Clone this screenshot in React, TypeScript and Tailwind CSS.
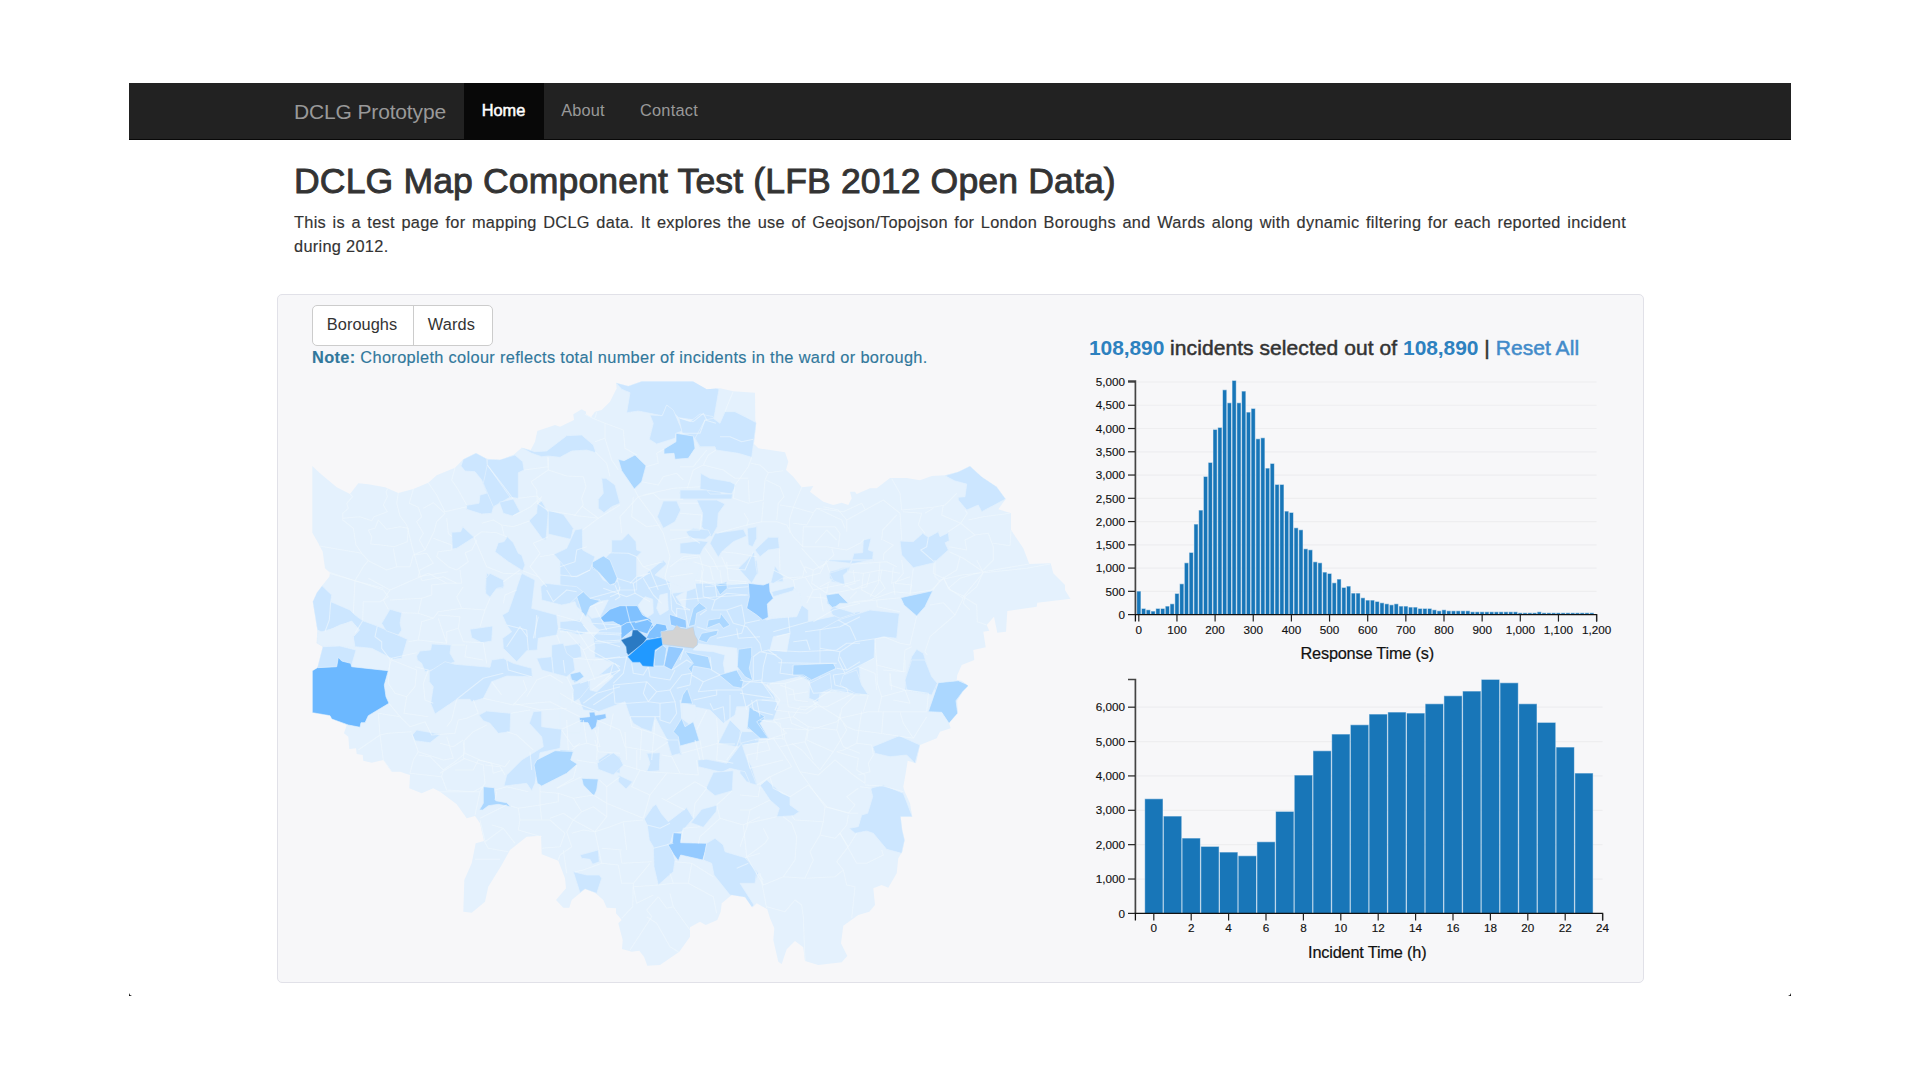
import React from "react";

type Sector = { ox: number; oy: number };
type Shape = [level: string, points: string];

const LEVELS: Record<string, string> = {
  a: "#e4f1fd",
  b: "#cce6ff",
  c: "#abd7ff",
  d: "#94caff",
  e: "#80c1ff",
  f: "#6cb8ff",
  g: "#2199ff",
  h: "#2a7ac3",
  n: "#d3d3d3",
};

const NW: Sector = { ox: 300, oy: 370 };
const NE: Sector = { ox: 680, oy: 370 };
const W: Sector = { ox: 300, oy: 570 };
const CENTRE: Sector = { ox: 560, oy: 560 };
const SW: Sector = { ox: 440, oy: 740 };
const SE: Sector = { ox: 740, oy: 660 };
const E: Sector = { ox: 820, oy: 560 };

const place = (s: Sector, pts: string) =>
  pts
    .trim()
    .split(/\s+/)
    .map((p) => {
      const [x, y] = p.split(",").map(Number);
      return `${(s.ox + x / 3).toFixed(1)},${(s.oy + y / 3).toFixed(1)}`;
    })
    .join(" ");

const OUTLINE = [
  place(NW, "37,288 60,310 110,352 150,372 175,340 205,343 255,352 295,369 340,357 385,338 410,316 465,293 490,268 528,249 560,266 600,269 640,255 665,233 692,240 705,215 712,183 765,165 780,170 822,150 820,133 845,118 858,125 858,133 873,142 885,125 905,120 930,95 950,55 948,38 985,48 1025,34 1175,34"),
  place(NE, "38,34 80,58 120,55 160,64 225,68 226,150 229,160 222,222 235,235 315,247 325,275 318,300 340,320 365,352 400,348 390,365 430,395 460,405 485,398 505,405 515,385 510,365 525,365 530,372 570,355 590,355 630,324 680,324 720,331 755,318 795,316 835,305 870,288 905,320 950,350 977,387 955,418 993,430 993,480 1030,535 1048,582 1112,580 1120,610 1155,645 1155,660 1170,685"),
  place(E, "752,116 652,128 650,140 562,153 558,215 532,218 522,170 500,195 508,212 490,215 497,262 460,270 463,300 425,315 412,345 410,360 425,362 445,378"),
  place(SE, "668,95 652,122 653,160 627,190 632,205 600,215 590,235 540,255 528,310 503,302 497,340 490,380 494,395 510,430 517,470 482,470 487,510 494,540 487,575 475,595 470,640 445,683 425,675 400,685 405,735 388,755 355,765 310,797 303,850 322,888 305,907 235,915 195,903 190,862 165,843 140,868 125,912 115,905 100,840 103,805 90,775 82,748 50,730 38,742"),
  place(SW, "935,500 915,472 875,465 845,490 842,515 832,540 797,555 780,545 750,562 750,590 718,635 660,675 622,677 612,650 598,632 575,635 546,627 548,600 535,550 545,540 528,520 528,505 500,503 490,480 465,458 435,447 395,480 388,503 370,503 348,480 378,445 375,415 355,362 305,343 303,287 260,290 210,330 185,375 145,440 135,485 95,518 70,515 73,420 95,370 107,310 132,303 120,250 105,228 80,235 50,193 0,155"),
  place(W, "400,655 365,670 328,655 330,615 300,605 275,605 250,570 215,578 190,572 188,555 170,552 168,535 148,537 145,500 132,490 140,465 95,447 90,437 37,428 37,302 52,293 68,230 50,220 52,180 38,95 50,68 66,47 88,20"),
  place(NW, "90,608 75,595 68,545 55,520 37,488"),
].join(" ");

const WARDS: [Sector, Shape[]][] = [
  [NW, [
    ["b", "948,38 985,48 1025,34 1200,34 1257,58 1240,155 1200,160 1185,150 1136,143 1100,105 1087,137 1050,130 1015,123 980,128 990,68 965,58"],
    ["b", "1050,135 1087,137 1100,105 1120,120 1147,183 1128,190 1125,205 1070,222 1048,208 1060,160"],
    ["b", "1136,143 1170,155 1200,132 1240,140 1245,225 1200,232 1180,200 1147,190"],
    ["c", "1128,190 1180,198 1185,235 1165,265 1125,268 1122,250 1092,252 1092,237 1128,215"],
    ["c", "955,268 972,272 1005,255 1038,287 1025,335 1003,357 965,302"],
    ["b", "665,233 705,245 740,243 800,197 845,195 880,225 888,248 860,240 815,243 780,262 745,258 725,260 695,250"],
    ["b", "483,288 490,268 528,249 560,266 562,285 625,380 580,412 575,430 545,432 500,418 500,406 537,400 540,375 560,370 545,330 525,305 495,303"],
    ["b", "562,268 600,269 645,255 668,275 672,300 655,308 655,385 630,382 562,285"],
    ["b", "562,285 630,382 580,410 550,340"],
    ["b", "598,397 640,387 660,425 638,438 610,430"],
    ["b", "455,487 482,485 488,470 522,502 470,535 457,537"],
    ["b", "687,452 710,430 712,403 725,393 745,428 738,510 728,508"],
    ["b", "745,420 790,433 820,475 812,508 745,492"],
    ["b", "905,325 918,325 945,345 960,400 935,410 912,428 895,415 895,388 910,370"],
    ["b", "585,545 595,518 612,515 622,500 640,518 655,550 665,555 675,585 668,602 625,575"],
    ["b", "762,553 800,535 825,480 847,476 848,540 885,560 870,600 830,618 815,620 790,585"],
    ["b", "935,510 965,510 985,490 1008,515 1010,540 1025,545 1010,560 1010,660 960,660 950,620 915,565 935,545"],
    ["c", "877,577 910,558 930,570 952,625 945,640 930,645 895,605 877,590"],
    ["b", "1090,393 1130,393 1142,420 1125,455 1090,475 1072,440"],
    ["b", "1137,368 1150,360 1260,362 1270,388 1150,388"],
    ["b", "560,610 580,620 612,630 610,655 555,660"],
    ["b", "665,612 705,635 690,660 660,660"],
  ]],
  [NE, [
    ["b", "120,160 135,125 165,125 195,140 229,158 215,262 175,250 108,240 105,230 60,230 45,205 75,150 100,145"],
    ["b", "62,310 90,325 150,335 168,345 155,372 60,358"],
    ["b", "0,360 80,360 90,372 158,372 155,387 0,387"],
    ["b", "50,390 110,390 135,402 115,430 112,470 95,500 85,495 65,470 68,430"],
    ["b", "18,485 40,475 85,480 92,495 75,508 30,505"],
    ["b", "0,520 60,512 85,515 70,535 60,555 0,550"],
    ["b", "90,520 105,490 190,478 200,498 160,515 125,545 115,562"],
    ["b", "202,475 230,470 230,505 218,530 205,525"],
    ["b", "225,540 265,502 295,502 298,535 265,540 240,560"],
    ["b", "175,595 200,570 222,545 228,590 232,610 215,640"],
    ["b", "272,638 285,588 300,610 312,622 280,640"],
    ["b", "795,317 835,305 870,288 905,320 950,350 977,387 905,425 895,405 860,420 835,390 835,382 855,380 860,342 825,333"],
    ["b", "660,513 700,515 728,490 745,502 775,485 780,500 805,488 808,512 795,518 805,540 762,578 700,593 665,555"],
    ["b", "550,510 573,505 565,540 580,545 578,568 512,583 522,550 548,548"],
    ["b", "447,605 510,590 505,603 490,610 492,640 450,627"],
  ]],
  [W, [
    ["b", "38,95 50,68 66,47 95,75 92,95 150,120 165,135 188,152 232,168 322,208 305,265 280,268 215,235 165,230 160,200 178,180 155,153 100,175 75,190 52,180"],
    ["a", "52,190 100,175 120,165 155,155 178,180 160,200 162,232 68,228 50,218"],
    ["b", "245,160 270,118 305,128 300,160 305,180 295,195 258,182"],
    ["b", "68,230 120,228 168,240 155,285 110,292 52,293"],
    ["f", "37,302 52,293 110,290 115,262 125,273 152,280 155,290 265,302 253,345 258,380 267,400 205,437 195,458 183,458 180,472 145,465 95,447 90,437 37,428"],
    ["b", "350,258 360,243 392,240 395,222 453,225 450,250 465,275 415,295 375,305 365,280 352,270"],
    ["b", "388,305 435,275 465,283 570,292 575,270 610,265 640,280 695,295 697,320 620,318 575,335 550,385 515,395 510,388 470,388 405,432 392,400 400,350 388,335"],
    ["b", "510,178 578,168 575,213 545,218 515,203"],
    ["b", "607,135 625,125 665,10 705,30 695,115 770,135 775,175 770,195 715,205 712,240 680,242 650,275 610,235 608,205 635,185 620,165"],
    ["b", "558,25 570,10 610,30 612,50 590,55 570,82 557,70"],
    ["b", "722,50 735,40 830,50 848,65 810,100 785,105 725,90"],
    ["b", "755,225 790,220 800,250 820,265 825,300 800,320 760,310 725,300 710,265 755,260"],
    ["c", "830,80 850,65 870,85 902,92 870,110 858,140 845,125"],
    ["c", "810,312 840,305 852,320 830,335 815,330"],
    ["b", "815,345 865,330 868,350 840,385 822,395"],
    ["b", "337,495 350,480 422,493 390,518 345,512"],
    ["b", "537,435 560,423 632,430 630,485 595,490 570,460 550,452"],
    ["b", "688,460 700,425 725,423 725,470 785,478 780,535 720,548 705,640 695,662 680,640 612,648 620,615 665,570 730,530 725,500"],
    ["c", "702,585 710,570 765,542 820,545 812,570 832,582 800,610 725,648 712,640"],
    ["b", "895,570 925,550 960,560 960,610 900,598"],
    ["c", "845,625 895,627 890,660 882,678 850,645"],
    ["c", "550,650 583,653 587,692 620,698 632,710 595,703 565,707 548,720 538,720 550,700"],
  ]],
  [CENTRE, [
    ["b", "0,0 70,0 110,30 130,60 160,75 175,55 210,45 250,50 265,35 310,0 320,12 285,45 330,65 335,100 375,95 405,85 405,70 560,70 570,75 568,140 620,180 640,175 710,165 725,135 745,150 745,185 860,160 900,155 900,405 830,395 790,395 765,425 745,405 750,365 720,350 625,375 610,370 650,415 655,440 640,480 600,480 580,460 560,440 490,490 450,450 400,440 360,420 365,475 410,510 360,560 365,585 330,575 325,545 300,500 285,470 275,515 245,505 220,490 210,470 195,425 115,455 70,450 45,390 60,370 100,360 160,310 120,295 95,290 105,265 100,230 120,210 100,200 90,175 75,160 50,140 0,130"],
    ["a", "235,135 255,110 278,118 280,160 262,172 245,155"],
    ["a", "300,105 322,100 325,150 300,165 290,145"],
    ["a", "348,110 380,92 375,150 362,130"],
    ["a", "80,130 145,120 120,170 95,175 60,140"],
    ["a", "0,135 45,125 60,170 95,190 110,205 95,235 105,290 80,350 60,370 0,350"],
    ["b", "0,185 60,180 85,215 60,225 0,210"],
    ["b", "0,260 60,250 65,290 30,300 0,295"],
    ["a", "90,350 150,340 160,350 110,395 90,390"],
    ["a", "165,60 190,50 215,65 205,80 185,75"],
    ["a", "320,10 400,5 420,20 400,70 370,85 330,65 310,50"],
    ["a", "405,250 530,265 535,330 495,340 490,310 495,285 460,275 400,270"],
    ["a", "610,120 700,85 720,100 725,135 710,170 640,175"],
    ["a", "640,230 690,220 680,275 630,270"],
    ["a", "630,370 720,350 750,365 745,425 650,430"],
    ["a", "530,440 565,440 568,490 545,515 520,490"],
    ["a", "365,435 405,435 410,470 400,490 385,485 365,475"],
    ["a", "0,400 65,450 60,520 0,520"],
    ["c", "97,25 110,0 145,0 172,50 165,68 155,75 130,45"],
    ["c", "50,105 65,98 85,120 120,118 90,135 80,170 65,155"],
    ["e", "120,175 150,148 180,137 232,137 248,165 272,178 280,200 260,222 225,210 183,198 160,185 132,187"],
    ["e", "183,198 200,188 225,185 262,178 278,190 262,222 240,215 215,212 183,238"],
    ["e", "258,235 268,215 290,190 318,195 322,210 305,220 303,232 272,238"],
    ["h", "183,240 215,228 218,210 232,210 260,235 250,250 205,285 200,278 198,260"],
    ["g", "203,290 260,240 305,232 308,255 285,270 280,320 248,318 240,307 218,307"],
    ["c", "282,318 285,275 308,255 320,265 312,318"],
    ["d", "312,318 325,258 372,265 335,330"],
    ["n", "303,215 340,210 350,195 362,205 380,207 400,200 405,225 413,240 412,255 400,265 320,255 308,253"],
    ["d", "328,163 350,170 378,180 380,205 350,200 332,195"],
    ["c", "385,200 400,145 418,128 440,145 410,160 405,195"],
    ["c", "440,205 445,180 480,175 482,160 510,195 490,205 478,190"],
    ["c", "415,240 425,220 475,210 470,225 450,232 440,248"],
    ["c", "465,75 500,65 502,85 480,105"],
    ["d", "565,70 610,75 628,68 630,95 640,115 622,132 625,172 608,180 590,165 560,145 568,110"],
    ["c", "375,275 445,290 455,328 400,318 395,340 385,325 400,310"],
    ["c", "478,345 530,330 550,365 545,385 520,380"],
    ["c", "535,268 575,262 575,290 568,325 578,362 555,350 532,320"],
    ["c", "697,318 820,310 828,325 750,362 728,348 698,345"],
    ["c", "800,108 830,103 865,130 835,130 820,148 802,130"],
    ["c", "368,405 382,385 398,432 362,430"],
    ["d", "58,473 89,470 87,457 104,456 106,466 137,461 139,475 112,483 108,500 95,511 84,488 60,486"],
    ["c", "30,345 60,335 70,348 45,368 32,355"],
    ["c", "340,515 365,475 375,500 400,485 418,542 360,558 355,530"],
    ["c", "565,435 580,445 582,465 615,475 600,490 628,538 595,520 560,505 575,480"],
    ["b", "475,550 510,480 545,515 600,530 595,548 530,560"],
    ["c", "0,570 38,572 20,598 0,600"],
    ["b", "810,45 840,25 870,20 865,35 840,50 850,70 815,65"],
    ["b", "635,65 645,20 668,50 670,65"],
    ["b", "635,95 705,78 700,92 640,110"],
    ["b", "550,20 590,0 595,40 575,60"],
  ]],
  [E, [
    ["b", "0,0 0,0 90,10 95,0 160,0"],
    ["b", "28,40 85,22 82,35 70,45 75,75 40,62"],
    ["c", "18,105 55,100 85,130 60,130 40,145 25,130"],
    ["c", "242,113 338,92 315,140 290,168 252,135"],
    ["b", "0,210 55,180 150,150 238,160 230,235 190,230 165,237 162,295 118,320 122,390 0,390"],
    ["b", "258,350 275,290 290,268 310,280 335,360 350,368 350,390 255,390"],
    ["c", "0,315 40,310 47,328 0,342"],
    ["b", "30,150 42,140 105,160 60,175 38,165"],
  ]],
  [SE, [
    ["b", "495,60 515,0 555,0 575,50 592,70 575,105 500,90"],
    ["c", "565,155 595,68 655,62 687,76 668,95 648,122 653,160 627,190 605,157"],
    ["b", "398,260 440,243 478,227 540,255 525,310 500,285 450,290 405,280"],
    ["b", "383,460 398,410 392,385 430,375 490,400 517,470 482,470 487,510 494,540 485,580 440,568 400,520 380,513 345,520 328,505 355,500 365,465"],
    ["b", "60,375 80,360 125,400 150,410 150,435 178,455 160,467 110,470 118,445 90,420"],
    ["b", "210,70 270,40 275,85 240,100 235,125 207,115"],
    ["b", "310,45 350,30 365,75 385,105 345,100 300,75"],
    ["b", "0,595 20,595 55,640 45,668 10,665"],
    ["b", "0,255 15,285 35,320 52,375 20,365 0,340"],
    ["b", "0,215 50,215 60,235 20,245 0,250"],
    ["c", "160,15 280,10 288,25 215,60 190,45 158,45"],
    ["c", "28,140 75,170 50,185 85,235 60,235 22,200"],
  ]],
  [SW, [
    ["b", "472,70 520,38 540,55 550,75 520,105 475,88"],
    ["b", "535,105 578,125 558,147 535,125"],
    ["b", "620,40 660,38 658,92 620,95 630,70"],
    ["b", "680,0 715,0 722,40 695,47"],
    ["b", "773,60 800,58 860,70 905,10 925,70 950,135 930,130 915,95 870,85 845,97 775,80"],
    ["b", "798,145 820,97 880,92 877,152 825,167"],
    ["b", "613,237 638,200 648,193 665,222 685,245 740,203 760,235 725,275 700,280 690,312 705,360 700,395 655,435 642,380 640,320 628,300 622,255"],
    ["d", "683,312 697,308 700,278 725,280 722,308 800,310 798,330 788,360 722,345 715,362 702,345"],
    ["b", "753,248 785,208 832,195 828,215 790,262"],
    ["b", "800,310 825,295 850,315 855,335 915,353 950,395 945,430 900,430 942,495 935,502 915,472 870,465 822,405 815,370 790,360"],
    ["b", "420,345 475,330 478,365 458,373 450,358 425,355"],
    ["b", "400,395 440,405 478,405 485,415 470,460 435,447 420,458"],
  ]],
];

const BOUNDARIES: [Sector, string[]][] = [
  [NW, [
    "150,372 158,380 140,400 145,415 128,430 128,450 160,475 168,525 185,550 205,572",
    "128,445 180,440 215,452 222,440 262,425 250,405 262,380 258,365 265,352",
    "295,369 290,400 300,438 320,465 335,525 365,632",
    "340,357 328,400 355,412 365,440 350,455 370,490 358,510 375,540 340,555",
    "385,338 410,375 435,425 500,410",
    "465,293 455,330 475,360 500,405",
    "205,480 225,475 235,450 260,478 300,470 325,475 322,515 282,530 245,525 212,522 215,500 205,480",
    "58,528 185,550", "75,602 165,632 250,655", "205,572 190,590 165,632",
    "205,572 260,600 290,590 280,535", "290,590 330,590 340,555",
    "370,415 400,398 435,430 410,455 402,485 385,520 375,540",
    "440,445 445,490 455,500", "400,505 455,525 455,540 415,545 410,560 445,590",
    "340,555 380,550 400,580 360,600 355,620 445,605", "365,632 430,620 470,640",
    "522,502 545,485 590,488 620,500", "522,502 560,590 610,610 665,612",
    "545,460 580,450 605,465 640,470 690,452", "605,465 612,495", "638,438 690,412 725,380 712,403",
    "655,385 710,378 725,393", "495,548 515,540 530,510", "495,548 505,575 470,600 445,590",
    "693,335 710,360 712,400 745,422 825,435 850,405 845,385 858,350 850,320 800,318 745,300 693,335",
    "672,300 745,290 745,262", "743,262 745,300", "885,245 920,280 930,320",
    "885,215 915,205 915,160 885,148 855,133", "915,160 970,180 975,235 1010,255", "915,205 935,270 955,300",
    "885,145 890,125", "820,436 895,445 960,405", "845,408 895,445 848,480",
    "1003,357 1015,380 1060,370 1080,388 1150,388", "1015,380 960,440 965,490",
    "1015,380 1060,440 1090,490 1110,560", "1038,290 1075,280 1070,250 1092,237",
    "1030,375 1120,355 1200,350", "1025,335 1075,345 1090,320 1130,310 1150,330",
    "1000,380 995,440 1040,470 1080,465", "1110,480 1200,480", "1110,510 1170,500 1200,520",
    "1110,560 1095,620 1110,660", "1110,590 1150,560 1200,555", "1110,620 1180,610",
    "700,520 745,500", "700,520 720,550 690,590 715,620", "762,553 720,560", "668,602 715,620 740,650",
    "1010,560 1030,590 1050,600 1075,660", "1030,590 1090,575", "990,640 1010,620 1050,610",
    "925,548 985,550 1010,560", "780,590 825,575 830,540 860,530", "640,387 562,285",
  ]],
  [NE, [
    "160,64 145,100 135,125", "120,200 150,200 185,215 220,208", "108,160 75,150 60,190 0,190", "0,145 40,155 70,130 80,150",
    "215,262 205,290 165,345 160,385 205,400 250,390 255,330 265,308 240,285 212,280",
    "108,240 85,255 70,285 130,300 165,325 205,325", "70,285 40,300 22,355", "0,290 40,290 80,240",
    "205,330 208,395", "265,308 310,302", "258,330 300,350 312,380 295,400 290,450",
    "250,395 245,455 290,455 320,465 340,500 368,530", "365,352 340,412 328,450 330,490",
    "340,412 400,428 410,415 485,450 495,475", "340,460 380,465 400,430", "300,405 340,412",
    "110,490 200,465 245,455", "192,430 205,450 200,468", "410,415 490,425 545,400 555,418",
    "500,485 500,450 610,390 660,430 665,510", "430,410 475,420 500,450",
    "368,530 440,530 500,540 540,520 552,508", "368,530 370,470 465,470 480,490 475,530",
    "405,520 440,480 470,510", "365,535 420,595 462,555 455,535",
    "635,326 660,370 665,420 760,412 795,405 830,370", "668,425 725,430 715,465 735,490",
    "605,510 608,480 650,435", "610,510 640,525 612,550 610,570", "790,405 785,435 842,460 862,430 855,420",
    "842,460 805,485", "735,430 760,415", "842,460 885,495 855,510 860,540 808,530",
    "865,450 910,440 990,430", "885,495 925,490 940,530 940,570 910,600", "940,520 990,527 993,480",
    "808,545 850,565 910,605 1048,582", "762,580 760,610 790,625 830,600 840,560",
    "910,605 890,650 855,680 850,700 870,720", "790,625 755,660 690,670 640,665 570,690 520,695",
    "790,625 810,660 855,680", "905,605 840,625 805,655", "700,595 690,670", "640,590 635,640 690,620",
    "512,583 620,575 650,590", "600,575 595,640 570,680", "520,600 525,640 490,650",
    "440,670 395,640 400,600 375,590 368,620 310,625", "400,600 440,580 450,610", "440,670 445,640",
    "445,672 560,650 570,610", "298,535 300,600", "125,560 140,595 195,600 220,545",
    "125,545 170,550 230,560", "120,600 125,640 205,640", "75,535 100,570 115,600", "75,650 200,640",
    "0,570 60,560 70,600 60,640", "0,430 65,435 60,480", "0,400 55,400",
    "745,502 740,530 722,540 762,575", "45,630 105,640 110,680 0,690", "110,680 205,675",
  ]],
  [W, [
    "88,10 165,32 250,60 265,80 240,95 190,95 188,150", "165,32 160,130", "205,25 270,60 385,10 440,40 485,40 480,0",
    "270,60 250,90 265,118", "305,128 355,130 365,85 270,90", "365,85 395,75 395,45 440,40",
    "355,130 400,145 415,125 485,115 470,80 490,50", "400,145 365,155 355,210 325,215", "415,145 440,220",
    "355,210 440,220 440,185 475,175 480,140 415,135", "475,175 490,215", "485,115 555,120 570,85",
    "490,215 550,218 560,280", "500,225 495,260 550,270", "455,225 495,225", "555,120 540,170",
    "610,100 615,75 650,60", "92,95 88,150 75,185", "188,152 165,190", "232,168 225,200 245,215 245,235 270,268",
    "265,302 275,265 350,248", "270,268 265,340 285,370 320,380 345,350 350,300 275,270",
    "345,290 385,300 370,340 375,390 400,400", "320,380 312,430 385,440", "267,400 300,440 235,430",
    "300,440 330,470 375,455 395,495 465,490 475,450 500,445 535,430 520,390",
    "470,388 455,450 440,470", "235,430 240,495 265,490 335,485", "240,495 175,540", "240,495 250,570 275,605",
    "335,490 355,545 340,570 330,610 425,620 430,600 390,560 355,555", "355,545 430,570 460,565 440,500",
    "490,515 495,550 540,570 615,590 630,570", "430,600 465,575 495,550", "425,620 440,660 520,665 548,650",
    "465,600 520,600 535,570 575,580 580,610 610,600", "495,510 520,485 560,465", "632,430 690,420",
    "620,485 650,495 700,540", "550,385 640,405 750,395 840,440", "640,405 680,360 670,330",
    "575,335 605,375", "680,380 710,330 750,315 790,340", "640,400 720,420 800,415",
    "785,478 845,450", "785,480 820,530 860,520 850,450", "860,520 900,530 885,480", "690,545 695,600",
    "620,165 680,180 685,240", "705,205 710,135", "770,135 840,155 850,130", "770,195 780,220",
    "775,175 860,190 960,195", "800,185 850,240 885,330", "830,180 870,240 960,290", "850,165 890,210 960,230",
    "820,265 885,270 960,260", "870,85 960,60", "885,110 920,180", "850,400 890,370 960,350",
    "850,240 885,220 960,215", "840,340 960,300", "470,388 550,325 610,310", "620,230 660,170 682,200",
    "740,60 760,95 800,60 830,65", "610,35 660,0", "755,260 760,310", "790,270 795,310", "620,270 625,300 695,320",
    "870,110 910,95", "800,320 820,360 815,400", "700,205 715,140",
  ]],
  [CENTRE, [
    "0,45 50,50 90,30", "165,75 180,110 165,120", "170,55 220,70 265,40", "220,70 225,100 200,110 130,85",
    "225,100 270,125", "250,55 280,105 305,130", "265,85 330,70", "330,70 335,150 350,170",
    "335,100 350,130 390,150", "425,30 430,110 465,120 500,100 560,105", "405,70 415,125", "430,65 465,75",
    "465,120 455,150 500,150 520,190", "505,85 565,80", "440,150 420,165", "500,150 545,135 555,190 600,180",
    "520,190 560,200 600,250 605,275", "555,190 545,220 470,235", "410,200 440,210 475,210", "530,205 535,235 600,230",
    "183,198 120,210", "105,245 185,240", "0,215 185,220", "95,190 180,195", "198,137 210,185 225,212",
    "225,188 265,178", "100,300 205,290", "165,310 180,330 140,360 95,390", "200,290 190,340 160,370",
    "215,310 220,340 250,345 265,320", "265,320 270,350 330,360 345,330", "160,310 150,345 110,380",
    "160,375 165,430 205,430", "160,375 260,365 250,400 265,425 205,430", "260,365 290,395 265,425",
    "290,395 330,390 345,425 300,430 265,425", "330,390 365,345 395,340 390,375 350,385", "300,430 300,480 330,490",
    "210,470 300,470", "345,425 350,460 330,490", "335,330 380,300 395,310", "372,265 360,300",
    "395,345 430,365 480,345", "430,365 415,395 470,390 470,405 400,420", "470,390 545,390", "510,405 510,480",
    "545,388 560,450", "545,385 570,365 640,370", "450,290 455,330 480,345", "580,360 580,290 600,275 650,285",
    "605,275 625,270 665,300 660,340 700,345", "625,270 720,275 830,270 860,250 900,250", "655,308 760,310 830,310",
    "605,370 610,320 620,280", "685,170 690,220 650,230", "745,185 640,215", "735,215 840,200 900,170",
    "700,245 740,240 750,270", "830,325 860,330 900,305", "820,345 825,375 860,385 865,400", "840,290 860,330",
    "745,365 760,400 830,395", "560,440 590,420 650,420", "590,420 600,470", "450,430 460,450 490,440 495,485",
    "0,400 50,430 115,455", "100,435 160,395", "110,480 180,510 195,560", "115,500 110,600",
    "160,460 150,510", "195,515 200,600", "285,480 275,600", "210,470 215,500 280,520 325,540",
    "245,510 240,600", "195,560 280,575 325,545", "365,580 475,550", "420,540 430,600", "470,475 475,550",
    "440,450 410,510", "545,515 530,560 500,600", "595,548 590,600", "640,480 700,470 720,440 800,440 880,400",
    "640,480 680,520 620,540", "700,470 745,500 735,545 660,560", "745,500 830,510 840,460", "830,510 850,560 900,580",
    "660,375 700,390 705,420 745,425", "20,480 25,570", "735,545 760,600", "640,30 700,60 780,40 800,0",
    "700,60 705,85", "735,50 760,90 740,130", "760,90 865,70 900,60", "740,110 800,115", "760,185 820,150 900,130",
    "720,0 740,40", "780,100 790,155", "400,5 450,20 540,15", "450,20 460,60", "500,5 505,60 560,65",
    "375,150 385,200", "350,170 350,145 390,150", "180,80 175,100 150,110",
  ]],
  [E, [
    "490,38 425,45 360,60 338,92", "490,38 430,110 470,135 472,185 500,195", "370,50 385,85 430,115",
    "430,115 405,165 330,230 315,275 322,285", "405,165 370,128 330,135", "290,168 270,255 240,250 195,232 105,245 60,275 0,265",
    "85,130 170,120 242,113", "170,120 172,140 240,155", "75,75 100,90 130,75 180,60", "130,40 125,90 165,110 195,85 180,60 185,30",
    "220,70 225,105", "225,70 275,75 270,105", "345,0 345,50 360,65", "470,0 490,38 620,25 690,12",
    "55,180 90,200 108,240", "165,237 170,315 250,335 255,270 275,260", "210,340 215,390", "115,320 165,340 170,390",
    "162,295 75,340 40,345", "60,275 55,300 75,340", "110,95 90,115",
    "0,80 30,65", "82,35 130,40 185,30 240,40", "245,0 250,40 225,70",
  ]],
  [SE, [
    "80,72 135,70 200,50", "135,70 145,140 195,150 235,125", "145,105 205,95", "80,75 120,120 105,150 145,155",
    "145,155 200,160 230,140 220,125 300,175 290,185 210,210 130,205", "145,155 155,190 205,210",
    "220,125 275,90 335,100", "300,175 305,145 345,105 385,105", "300,175 385,155 560,155", "385,105 370,155",
    "410,0 412,70 425,110 500,90 565,100 560,155", "430,30 495,35 495,0", "425,110 415,155", "450,40 450,75 495,90",
    "495,90 510,130 460,120", "300,175 320,200 345,210 420,220 520,235 560,170", "430,155 425,220", "480,155 490,190 520,235",
    "365,155 350,250 310,270 290,275", "310,190 320,210 280,275 240,330 185,270 155,250", "205,210 200,240 280,275",
    "130,205 135,240 155,285 180,335 235,345 285,300 340,345 375,370 375,345 350,330 355,295 290,275",
    "350,250 395,255 400,285 385,310 390,335 355,345", "375,375 430,378 490,395", "355,385 320,410 345,435 325,460 260,440 205,375",
    "180,335 255,440 330,460 355,460", "395,385 360,380", "20,285 90,270 80,240 100,235 155,320 90,350 60,375",
    "20,285 30,325 130,300", "90,350 100,385 150,410 205,375", "45,240 130,235", "10,255 80,245",
    "255,440 250,485 165,480 155,467", "250,485 240,525 210,575 220,600 195,655 130,650 165,600 170,530 155,490 130,470",
    "240,525 285,535 300,520 350,610 380,610 430,585 425,570", "300,520 325,560 290,605 310,630 285,650 200,655",
    "350,520 325,560", "325,465 320,495 295,525", "310,630 320,675 345,680 335,775", "130,650 70,675 20,590 75,550 85,535 70,505",
    "25,490 110,470", "25,490 0,560", "90,420 30,450 20,500", "0,405 55,410 60,380", "70,675 60,640 80,745",
    "80,740 135,755 165,720 185,735 190,770 195,903", "0,450 30,450", "55,640 70,660", "52,375 90,350",
    "0,60 20,65 65,60", "65,120 115,125 105,150", "35,120 40,150 100,165", "60,180 120,190 130,240", "0,100 100,115 65,65",
  ]],
  [SW, [
    "73,0 70,55 130,75 135,130 120,155 0,155", "0,100 40,75 75,55", "120,155 105,225", "135,75 180,80 195,105",
    "165,150 200,140 265,155", "165,180 170,155", "212,198 235,205 300,195 300,140", "200,195 120,235",
    "120,240 135,305 190,265 155,255", "190,265 225,310", "105,358 180,358", "132,303 145,325 205,335",
    "235,205 240,240 305,240 300,195", "240,240 235,270 305,290", "305,240 330,240 375,280 360,320 305,325",
    "300,195 355,185 355,160 300,155", "330,235 370,220 400,240 380,275", "355,160 400,175 425,215 400,240",
    "380,275 395,320 360,345 355,360", "400,240 465,275 500,230 460,200 425,215", "350,145 425,110", "400,175 460,165 500,190 610,235",
    "500,190 500,230", "465,275 485,370 430,390 405,395", "395,280 430,270 465,275", "465,275 510,260 550,245 560,330",
    "550,245 610,240", "485,325 545,330", "485,370 535,375 545,430 580,430 630,370", "545,370 635,365", "580,430 578,500 545,535",
    "545,370 540,330", "655,435 580,440 590,490 640,465", "655,435 700,430 690,400", "655,470 620,510 635,530 570,630",
    "655,470 680,505 700,500 750,570", "620,530 650,550 690,620 715,635", "700,430 745,430 755,370 705,365",
    "745,430 820,470 830,520", "690,460 700,500", "755,370 820,410", "500,190 500,140 540,110", "478,120 500,140",
    "550,75 600,90 620,95", "600,90 575,140 630,165 680,100", "620,95 700,100 775,105 770,60", "630,165 610,235",
    "665,45 695,50 720,100", "680,180 765,125 800,145", "665,175 735,210", "760,235 765,190 800,145",
    "830,195 840,235 780,290 775,310", "877,152 830,195", "840,235 910,255 920,350", "910,255 960,230", "915,353 960,340",
    "723,305 730,265 780,260", "410,75 400,115 350,145", "410,60 440,65 470,70", "395,30 420,10", "465,0 475,35 540,40",
    "590,30 590,90", "370,330 380,400", "835,0 830,60 880,70", "835,12 885,12", "765,0 780,60",
    "622,255 660,265 690,250", "640,325 700,310", "890,385 925,370", "0,10 40,20 70,0",
  ]],
];

const DRAW_ORDER = [3, 0, 1, 2, 4, 5, 6];

function LondonMap() {
  return (
    <svg className="block h-[586px] w-[760px]" viewBox="312 380 760 586">
      <clipPath id="land">
        <polygon points={OUTLINE} />
      </clipPath>
      <polygon points={OUTLINE} fill={LEVELS.a} />
      <g clipPath="url(#land)">
        {DRAW_ORDER.map((i) => {
          const [s, shapes] = WARDS[i];
          return (
            <g key={i} stroke="#e2f1fe" strokeWidth={0.7} strokeLinejoin="round">
              {shapes.map(([level, pts], j) => (
                <polygon key={j} points={place(s, pts)} fill={LEVELS[level]} />
              ))}
            </g>
          );
        })}
        <g fill="none" stroke="#f0f8fe" strokeOpacity={0.6} strokeWidth={1.1} strokeLinejoin="round">
          {BOUNDARIES.map(([s, lines], i) => (
            <g key={i}>
              {lines.map((l, j) => (
                <polyline key={j} points={place(s, l)} />
              ))}
            </g>
          ))}
        </g>
        <g stroke="#a8d3fb" strokeWidth={0.5}>
          {WARDS[3][1]
            .filter(([l]) => "ghn".includes(l))
            .map(([level, pts], i) => (
              <polygon key={i} points={place(CENTRE, pts)} fill={LEVELS[level]} />
            ))}
        </g>
      </g>
    </svg>
  );
}

const RESPONSE_TOPS = [
  845, 897, 901, 905, 897, 897, 890, 883, 852, 823, 760, 729, 644, 602, 501, 459, 360, 354, 241, 280, 213, 280, 245,
  308, 297, 388, 385, 476, 462, 525, 525, 605, 609, 655, 661, 718, 721, 757, 760, 788, 792, 820, 809, 834, 830, 851,
  851, 865, 872, 872, 876, 880, 883, 886, 883, 890, 890, 893, 893, 897, 897, 897, 901, 904, 901, 904, 904, 904, 904,
  904, 907, 907, 907, 907, 907, 907, 907, 907, 907, 907, 910, 910, 910, 910, 907, 910, 910, 910, 910, 910, 910, 910,
  910, 910, 910, 910,
];
const HOUR_TOPS = [
  417, 469, 535, 560, 577, 588, 546, 455, 346, 273, 223, 195, 163, 157, 160, 132, 108, 94, 59, 69, 132, 188, 262, 340,
];

type ChartProps = {
  originY: number;
  top: number;
  base: number;
  endX: number;
  bars: { x: number; w: number; y: number }[];
  yTicks: { y: number; label: string }[];
  xTicks: { x: number; label: string }[];
  title: string;
  titleWidth: number;
  height: number;
};

function Chart({ originY, top, base, endX, bars, yTicks, xTicks, title, titleWidth, height }: ChartProps) {
  return (
    <svg
      className="block w-[550px] font-['Liberation_Sans',Arial,sans-serif]"
      height={height}
      viewBox={`1080 ${originY} 550 ${height}`}
    >
      <g stroke="#eeeef0" strokeWidth={1.2}>
        {yTicks.slice(1).map((t) => (
          <line key={t.label} x1={1137} x2={endX} y1={t.y} y2={t.y} />
        ))}
      </g>
      <g fill="#8cbbdd">
        {bars.map((b, i) => (
          <rect key={i} x={b.x - 0.5} y={b.y - 0.6} width={b.w + 1} height={base - b.y + 0.6} />
        ))}
      </g>
      <g fill="#1876b8">
        {bars.map((b, i) => (
          <rect key={i} x={b.x} y={b.y} width={b.w} height={base - b.y} />
        ))}
      </g>
      <path d={`M1128 ${top}H1135.4V${base}`} fill="none" stroke="#444" strokeWidth={1.7} />
      <path d={`M1135.4 ${base + 7}V${base}H${endX}V${base + 7}`} fill="none" stroke="#111" strokeWidth={1.3} />
      <g stroke="#222" strokeWidth={1.2}>
        {yTicks.map((t) => (
          <line key={t.label} x1={1128} x2={1135} y1={t.y} y2={t.y} />
        ))}
        {xTicks.map((t) => (
          <line key={t.label} x1={t.x} x2={t.x} y1={base} y2={base + 7} />
        ))}
      </g>
      <g fontSize={11.7} fill="#111" stroke="#111" strokeWidth={0.15}>
        {yTicks.map((t) => (
          <text key={t.label} x={1125} y={t.y + 4.2} textAnchor="end">
            {t.label}
          </text>
        ))}
        {xTicks.map((t) => (
          <text key={t.label} x={t.x} y={base + 19} textAnchor="middle">
            {t.label}
          </text>
        ))}
      </g>
      <text
        x={1367.3 - titleWidth / 2}
        y={base + 44.8}
        fontSize={16.3}
        textLength={titleWidth}
        fill="#111"
        stroke="#111"
        strokeWidth={0.2}
      >
        {title}
      </text>
    </svg>
  );
}

const fmt = (n: number) => n.toLocaleString("en-US");

export default function App() {
  return (
    <div className="h-[1080px] w-[1920px] overflow-hidden bg-white pt-[83.4px] font-['Liberation_Sans',Arial,sans-serif] text-[16.35px] text-[#333]">
      <div className="mx-auto flex h-[913px] w-[1662px] flex-col">
        <nav className="flex h-[57px] shrink-0 items-stretch border-b border-[#080808] bg-[#222] pl-[165px] text-[#999]">
          <div className="flex w-[170px] items-center pt-px text-[21px] tracking-[-0.15px]">DCLG Prototype</div>
          <div className="flex w-[80px] items-center justify-center bg-[#080808] pb-[2px] pr-px text-white [-webkit-text-stroke:0.5px_white]">
            Home
          </div>
          <div className="flex w-[78px] items-center justify-center pb-[2px] tracking-[0.2px]">About</div>
          <div className="flex w-[94px] items-center justify-center pb-[2px] tracking-[0.25px]">Contact</div>
        </nav>

        <header className="ml-[165px] w-[1332px] pt-[20px]">
          <h1 className="h-[42px] whitespace-nowrap text-[35.6px] leading-[42px] tracking-[0.13px] [-webkit-text-stroke:0.9px]">
            DCLG Map Component Test (LFB 2012 Open Data)
          </h1>
          <p className="mt-[9px] text-justify leading-[23.4px] tracking-[0.3px] [-webkit-text-stroke:0.15px]">
            This is a test page for mapping DCLG data. It explores the use of Geojson/Topojson for London Boroughs and
            Wards along with dynamic filtering for each reported incident during 2012.
          </p>
        </header>

        <main className="ml-[148px] mt-[36.2px] flex h-[689px] w-[1367px] shrink-0 rounded-[5px] border border-[#e1e1e8] bg-[#f7f7f9] pl-[34px]">
          <section className="w-[768px] pt-[10px]">
            <div className="flex h-[41px] w-[181px] rounded-[5px] border border-[#ccc] bg-white">
              <button className="w-[101px] border-r border-[#ccc] pb-[3px] pr-[2px] tracking-[0.05px]">Boroughs</button>
              <button className="flex-1 pb-[3px] pr-[3px] tracking-[0.15px]">Wards</button>
            </div>
            <p className="h-[23px] whitespace-nowrap leading-[23px] tracking-[0.34px] text-[#31789c] [-webkit-text-stroke:0.15px]">
              <b>Note:</b> Choropleth colour reflects total number of incidents in the ward or borough.
            </p>
            <div className="pt-[11px]">
              <LondonMap />
            </div>
          </section>

          <section className="pt-[40px]">
            <h4 className="ml-[9px] h-[26px] whitespace-nowrap text-[21px] leading-[26px] tracking-[0.07px] [-webkit-text-stroke:0.5px]">
              <b className="tracking-[-0.1px] text-[#2d81bf] [-webkit-text-stroke:0px]">108,890</b> incidents selected out of{" "}
              <b className="tracking-[-0.1px] text-[#2d81bf] [-webkit-text-stroke:0px]">108,890</b> |{" "}
              <a className="text-[#428bca]">Reset All</a>
            </h4>
            <Chart
              originY={361}
              height={308}
              top={381}
              base={614.6}
              endX={1596.6}
              bars={RESPONSE_TOPS.map((t, i) => ({ x: 1138.8 + i * 4.768 - 1.6, w: 3.2, y: 310 + t / 3 }))}
              yTicks={Array.from({ length: 11 }, (_, i) => ({ y: 614.6 - i * 23.26, label: fmt(i * 500) }))}
              xTicks={Array.from({ length: 13 }, (_, i) => ({ x: 1138.8 + i * 38.15, label: fmt(i * 100) }))}
              title="Response Time (s)"
              titleWidth={133.6}
            />
            <Chart
              originY={669}
              height={308}
              top={679.5}
              base={913.4}
              endX={1602.6}
              bars={HOUR_TOPS.map((t, i) => ({ x: 1153.8 + i * 18.7 - 8.6, w: 17.3, y: 660.3 + t / 3 }))}
              yTicks={Array.from({ length: 7 }, (_, i) => ({ y: 913.4 - i * 34.37, label: fmt(i * 1000) }))}
              xTicks={Array.from({ length: 13 }, (_, i) => ({ x: 1153.8 + i * 37.4, label: fmt(i * 2) }))}
              title="Incident Time (h)"
              titleWidth={118.5}
            />
          </section>
        </main>

        <footer className="mt-auto flex justify-between">
          <svg className="h-[3px] w-[3px]" viewBox="0 0 3 3">
            <path d="M0 0Q.5 2.5 3 3H0Z" fill="#111" />
          </svg>
          <svg className="h-[3px] w-[3px]" viewBox="0 0 3 3">
            <path d="M3 0Q2.500 2.5 0 3H3Z" fill="#111" />
          </svg>
        </footer>
      </div>
    </div>
  );
}
